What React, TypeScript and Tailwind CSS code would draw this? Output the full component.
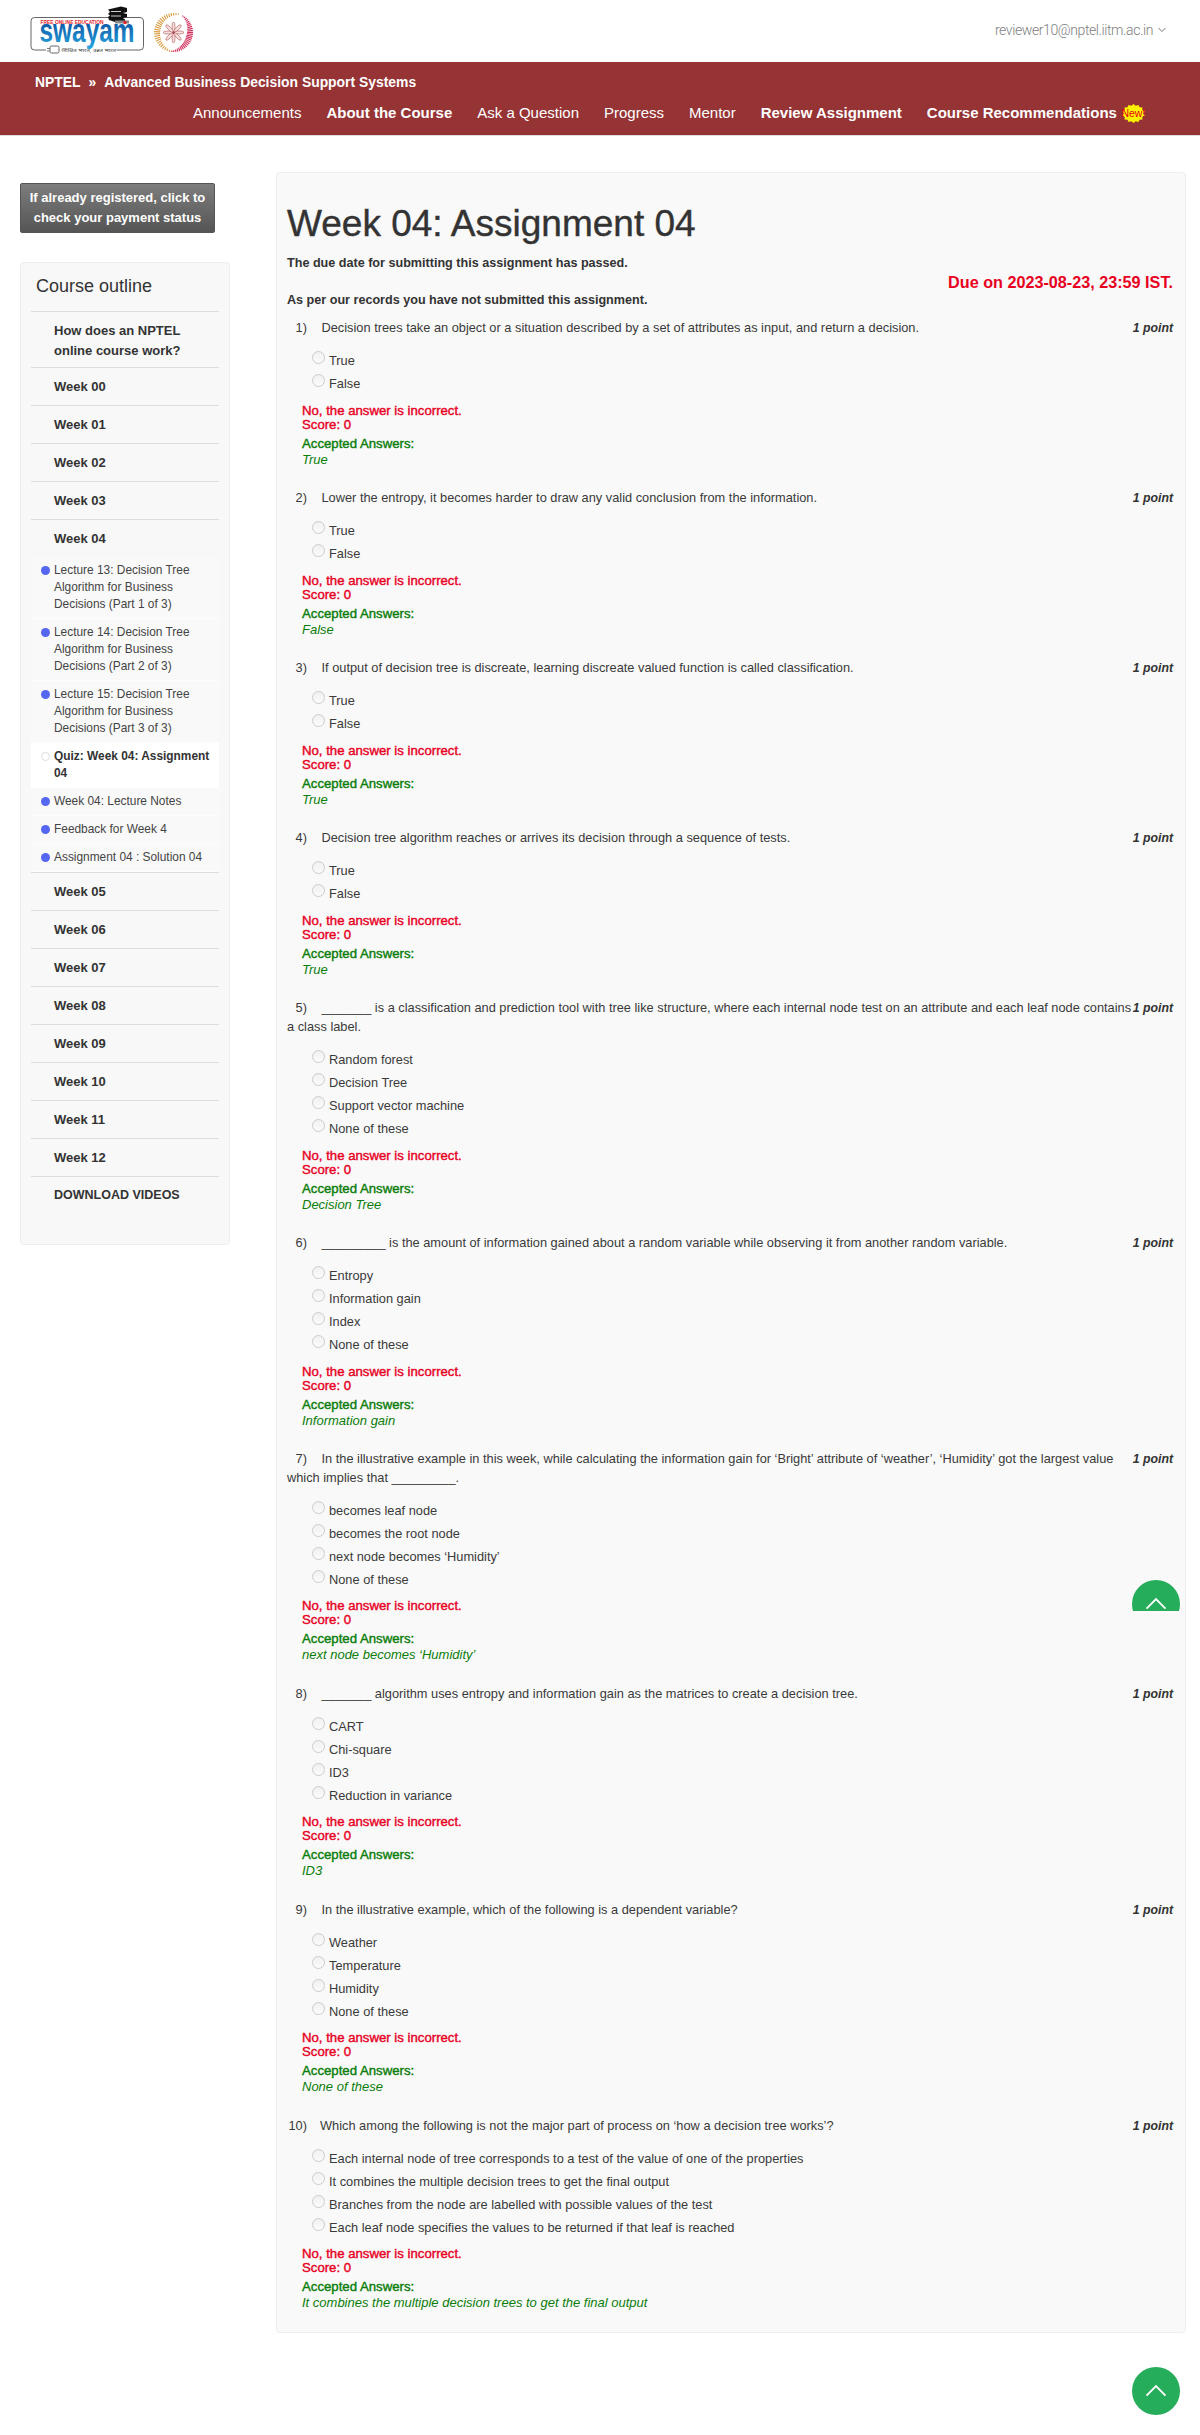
import React from "react";

type Q = { n: number; text: string; options: string[]; answer: string };

const questions: Q[] = [
  { n: 1, text: "Decision trees take an object or a situation described by a set of attributes as input, and return a decision.", options: ["True", "False"], answer: "True" },
  { n: 2, text: "Lower the entropy, it becomes harder to draw any valid conclusion from the information.", options: ["True", "False"], answer: "False" },
  { n: 3, text: "If output of decision tree is discreate, learning discreate valued function is called classification.", options: ["True", "False"], answer: "True" },
  { n: 4, text: "Decision tree algorithm reaches or arrives its decision through a sequence of tests.", options: ["True", "False"], answer: "True" },
  { n: 5, text: "_______ is a classification and prediction tool with tree like structure, where each internal node test on an attribute and each leaf node contains a class label.", options: ["Random forest", "Decision Tree", "Support vector machine", "None of these"], answer: "Decision Tree" },
  { n: 6, text: "_________ is the amount of information gained about a random variable while observing it from another random variable.", options: ["Entropy", "Information gain", "Index", "None of these"], answer: "Information gain" },
  { n: 7, text: "In the illustrative example in this week, while calculating the information gain for ‘Bright’ attribute of ‘weather’, ‘Humidity’ got the largest value which implies that _________.", options: ["becomes leaf node", "becomes the root node", "next node becomes ‘Humidity’", "None of these"], answer: "next node becomes ‘Humidity’" },
  { n: 8, text: "_______ algorithm uses entropy and information gain as the matrices to create a decision tree.", options: ["CART", "Chi-square", "ID3", "Reduction in variance"], answer: "ID3" },
  { n: 9, text: "In the illustrative example, which of the following is a dependent variable?", options: ["Weather", "Temperature", "Humidity", "None of these"], answer: "None of these" },
  { n: 10, text: "Which among the following is not the major part of process on ‘how a decision tree works’?", options: ["Each internal node of tree corresponds to a test of the value of one of the properties", "It combines the multiple decision trees to get the final output", "Branches from the node are labelled with possible values of the test", "Each leaf node specifies the values to be returned if that leaf is reached"], answer: "It combines the multiple decision trees to get the final output" },
];

const weeksBefore = ["Week 00", "Week 01", "Week 02", "Week 03"];
const weeksAfter = ["Week 05", "Week 06", "Week 07", "Week 08", "Week 09", "Week 10", "Week 11", "Week 12"];
const lessons = [
  "Lecture 13: Decision Tree Algorithm for Business Decisions (Part 1 of 3)",
  "Lecture 14: Decision Tree Algorithm for Business Decisions (Part 2 of 3)",
  "Lecture 15: Decision Tree Algorithm for Business Decisions (Part 3 of 3)",
];
const lessonsAfter = ["Week 04: Lecture Notes", "Feedback for Week 4", "Assignment 04 : Solution 04"];

function SwayamLogo() {
  return (
    <svg width="125" height="52" viewBox="0 0 125 52" className="shrink-0">
      <defs>
        <linearGradient id="sw" x1="0" y1="0" x2="0" y2="1">
          <stop offset="0.2" stopColor="#0b4f9e" />
          <stop offset="1" stopColor="#27a9e1" />
        </linearGradient>
      </defs>
      <path d="M36 46H115a3.500 3.500 0 0 0 3.500-3.500V17a3.500 3.500 0 0 0-3.500-3.500H9.500A3.500 3.500 0 0 0 6 17V42.500a3.500 3.500 0 0 0 3.500 3.500H21" fill="none" stroke="#555" strokeWidth="0.9" />
      <rect x="25" y="42" width="9" height="7" rx="1.500" fill="#fff" stroke="#444" strokeWidth="0.8" />
      <path d="M25 44.500h-3M25 47h-3" stroke="#444" strokeWidth="0.7" />
      <text x="15.500" y="20" fontFamily="'Liberation Sans', sans-serif" fontSize="4.800" fontWeight="700" fill="#e2232a" textLength="63" lengthAdjust="spacingAndGlyphs">FREE ONLINE EDUCATION</text>
      <text x="14.500" y="38" fontFamily="'Liberation Sans', sans-serif" fontSize="33" fontWeight="700" fill="url(#sw)" textLength="95" lengthAdjust="spacingAndGlyphs">swayam</text>
      <path d="M83 5.500 96 2.500l6 1.500v4l-4 1 4 1v3l-4 1 2 1.500V18H90l-6-2-1-3 2-1.500L83 10l2-2z" fill="#111" />
      <path d="M86 7.500h10M86 12h10" stroke="#fff" strokeWidth="0.8" />
      <rect x="90" y="16.500" width="14" height="3" fill="#888" />
      <circle cx="100" cy="18.500" r="1.700" fill="#e2232a" />
      <rect x="36.500" y="45" width="55" height="2" fill="#fff" />
      <text x="37" y="47.500" fontFamily="'Noto Sans', 'Liberation Sans', sans-serif" fontSize="4" fill="#444" textLength="54" lengthAdjust="spacingAndGlyphs">शिक्षित भारत, उन्नत भारत</text>
    </svg>
  );
}

function Arc({ from, to, color }: { from: number; to: number; color: string }) {
  const n = 26;
  return (
    <>
      {Array.from({ length: n + 1 }, (_, i) => {
        const t = i / n;
        const a = ((from + (to - from) * t) * Math.PI) / 180;
        const len = 1.200 + 5 * Math.sin(Math.PI * t);
        const x = Math.cos(a);
        const y = Math.sin(a);
        return <line key={i} x1={x * (19.500 - len)} y1={y * (19.500 - len)} x2={x * 19.500} y2={y * 19.500} stroke={color} strokeWidth="1.100" />;
      })}
    </>
  );
}

function IitmLogo() {
  const petals = Array.from({ length: 8 }, (_, i) => i * 45);
  return (
    <svg width="41" height="41" viewBox="-20.500 -20.500 41 41" className="shrink-0">
      <Arc from={95} to={285} color="#d99a3e" />
      <Arc from={-60} to={95} color="#cf2f5b" />
      {petals.map((d) => (
        <ellipse key={d} cx="0" cy="-5.500" rx="1.500" ry="5" fill="#f6e0da" stroke="#b0505a" strokeWidth="0.600" transform={`rotate(${d})`} />
      ))}
      <circle r="1.300" fill="#a8454f" />
    </svg>
  );
}

function NewBadge() {
  const pts = Array.from({ length: 28 }, (_, i) => {
    const a = (i * Math.PI) / 14;
    const r = i % 2 ? 1 : 0.84;
    return `${(11.500 + Math.cos(a) * 11.500 * r).toFixed(1)},${(9.500 + Math.sin(a) * 9.500 * r).toFixed(1)}`;
  }).join(" ");
  return (
    <span className="relative ml-[5px] inline-flex h-[19px] w-[23px] items-center justify-center">
      <svg width="23" height="19" viewBox="0 0 23 19" className="absolute inset-0">
        <polygon points={pts} fill="#fff200" />
      </svg>
      <span className="relative text-[10.500px] font-normal leading-none text-[#e3001b]">New!</span>
    </span>
  );
}

function Chevron({ size = 22 }: { size?: number }) {
  return (
    <svg width={size} height={size * 0.6} viewBox="0 0 22 13" fill="none">
      <path d="M1.500 11.500 11 2l9.500 9.500" stroke="#fff" strokeWidth="1.800" />
    </svg>
  );
}

function Question({ q }: { q: Q }) {
  return (
    <div className="pb-[21.500px]">
      <div className="text-[12.800px] leading-[18.570px] text-[#3a3a3a]">
        <span className="float-right text-[12.300px] font-bold italic text-[#333]">1 point</span>
        <span className="inline-block w-[20px] text-right">{q.n})</span>
        <span className={q.n === 10 ? "ml-[13px]" : "ml-[14.500px]"}>{q.text}</span>
      </div>
      <div className="mt-[11.500px] pl-[25px]">
        {q.options.map((o) => (
          <div key={o} className="flex h-[23px] gap-[4px] text-[12.800px] leading-[23px] text-[#3a3a3a]">
            <span className="mt-[2px] h-[13px] w-[13px] shrink-0 rounded-full border border-[#ccc] bg-gradient-to-b from-[#f1f1f1] to-[#fbfbfb]" />
            <span>{o}</span>
          </div>
        ))}
      </div>
      <div className="mt-[8.500px] pl-[15px] text-[13.200px] leading-[14px] text-[#e8001f] [-webkit-text-stroke:0.4px_#e8001f]">
        <div>No, the answer is incorrect.</div>
        <div>Score: 0</div>
      </div>
      <div className="mt-[4px] pl-[15px] text-[13.200px] leading-[16px] text-[#0a7d0a]">
        <div className="[-webkit-text-stroke:0.4px_#0a7d0a]">Accepted Answers:</div>
        <div className="text-[13px] italic">{q.answer}</div>
      </div>
    </div>
  );
}

function WeekRow({ label, border = true, small }: { label: string; border?: boolean; small?: boolean }) {
  return (
    <div className={`py-[9px] pl-[23px] font-bold leading-[19px] text-[#333] ${small ? "text-[12.500px]" : "text-[13px]"} ${border ? "border-b border-[#ddd]" : ""}`}>
      {label}
    </div>
  );
}

function Lesson({ label, active }: { label: string; active?: boolean }) {
  return (
    <div className={`flex gap-[4px] border-b py-[5px] pl-[10px] pr-[5px] text-[11.900px] leading-[17px] ${active ? "border-white bg-white font-bold text-[#333]" : "border-[#fdfdfd] bg-[#f9f9f9] text-[#444]"}`}>
      {active ? (
        <span className="mt-[4px] h-[9px] w-[9px] shrink-0 rounded-full border border-[#ddd] bg-white" />
      ) : (
        <span className="mt-[4px] h-[9px] w-[9px] shrink-0 rounded-full bg-[#5567f0]" />
      )}
      <span>{label}</span>
    </div>
  );
}

function Sidebar() {
  return (
    <aside className="w-[210px] shrink-0">
      <div className="ml-0 flex h-[50px] w-[195px] flex-col items-center justify-center rounded-[2px] border border-[#555] bg-gradient-to-b from-[#7d7d7d] to-[#555] text-center text-[13px] font-bold leading-[20px] text-white">
        <div>If already registered, click to</div>
        <div>check your payment status</div>
      </div>
      <div className="mt-[29px] h-[983px] rounded-[4px] border border-[#eee] bg-[#f8f8f8] px-[10px]">
        <div className="border-b border-[#ddd] pb-[12px] pl-[5px] pt-[11px] text-[18px] leading-[25px] text-[#333]">Course outline</div>
        <div className="border-b border-[#ddd] pb-[6px] pl-[23px] pt-[8.500px] text-[13px] font-bold leading-[20px] text-[#333]">
          How does an NPTEL online course work?
        </div>
        {weeksBefore.map((w) => (
          <WeekRow key={w} label={w} />
        ))}
        <WeekRow label="Week 04" border={false} />
        {lessons.map((l) => (
          <Lesson key={l} label={l} />
        ))}
        <Lesson label="Quiz: Week 04: Assignment 04" active />
        {lessonsAfter.map((l) => (
          <Lesson key={l} label={l} />
        ))}
        <div className="border-t border-[#ddd]" />
        {weeksAfter.map((w) => (
          <WeekRow key={w} label={w} />
        ))}
        <WeekRow label="DOWNLOAD VIDEOS" border={false} small />
      </div>
    </aside>
  );
}

export default function App() {
  return (
    <div className="relative h-[2435px] w-[1200px] overflow-hidden bg-white font-['Liberation_Sans',Arial,sans-serif]">
      <header className="flex h-[62px] items-start pl-[25px]">
        <div className="mt-[4px]"><SwayamLogo /></div>
        <div className="ml-[3px] mt-[12px]"><IitmLogo /></div>
        <div className="ml-auto mr-[34px] mt-[21px] flex items-center gap-[5px] font-['Roboto',sans-serif] text-[14px] font-light leading-[18px] tracking-[-0.4px] text-[#808080]">
          <span>reviewer10@nptel.iitm.ac.in</span>
          <svg width="8" height="6" viewBox="0 0 8 6" fill="none"><path d="M.5 1 4 4.500 7.500 1" stroke="#777" strokeWidth="1" /></svg>
        </div>
      </header>

      <nav className="h-[74px] border-b border-[#ddd] bg-[#953335] text-white">
        <div className="flex pl-[35px] pt-[11px] text-[13.900px] font-bold leading-[18px]">
          <span>NPTEL</span>
          <span className="mx-[8px]">»</span>
          <span>Advanced Business Decision Support Systems</span>
        </div>
        <div className="mt-[12px] flex items-center gap-[25px] pl-[193px] text-[15px] leading-[20px]">
          <span>Announcements</span>
          <span className="font-bold">About the Course</span>
          <span>Ask a Question</span>
          <span>Progress</span>
          <span>Mentor</span>
          <span className="font-bold">Review Assignment</span>
          <span className="flex items-center font-bold">Course Recommendations<NewBadge /></span>
        </div>
      </nav>

      <div className="flex items-start gap-[46px] pl-[20px] pt-[36px]">
        <div className="pt-[11px]"><Sidebar /></div>
        <main className="h-[2161px] w-[910px] rounded-[4px] border border-[#eee] bg-[#f9f9f9] pl-[10px] pr-[12px] pt-[31px]">
          <h1 className="text-[37px] font-normal leading-[40px] text-[#333] [-webkit-text-stroke:0.4px_#333]">Week 04: Assignment 04</h1>
          <p className="mt-[10px] text-[12.600px] font-bold leading-[18.570px] text-[#333]">The due date for submitting this assignment has passed.</p>
          <div className="h-[18px] text-right text-[16.200px] font-bold leading-[19px] text-[#e8001f]">Due on 2023-08-23, 23:59 IST.</div>
          <p className="text-[12.600px] font-bold leading-[18.570px] text-[#333]">As per our records you have not submitted this assignment.</p>
          <div className="mt-[10px]">
            {questions.map((q) => (
              <Question key={q.n} q={q} />
            ))}
          </div>
        </main>
      </div>

      <div className="absolute left-[1132px] top-[1580px] h-[31px] w-[48px] overflow-hidden">
        <div className="flex h-[48px] w-[48px] items-center justify-center rounded-full bg-[#26ad5b]"><Chevron /></div>
      </div>
      <div className="absolute left-[1132px] top-[2367px] flex h-[48px] w-[48px] items-center justify-center rounded-full bg-[#26ad5b]"><Chevron /></div>
    </div>
  );
}
